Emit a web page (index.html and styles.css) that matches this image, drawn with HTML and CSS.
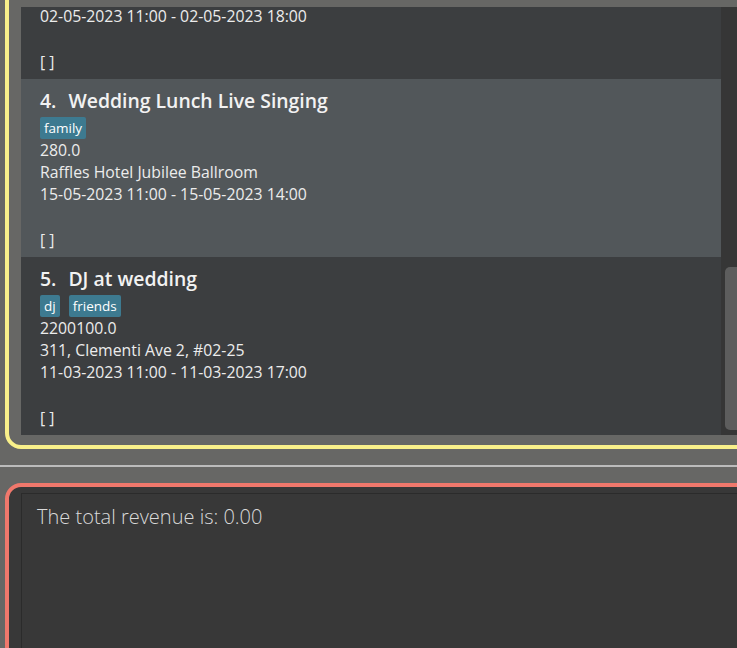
FILE: index.html
```html
<!DOCTYPE html>
<html>
<head>
<meta charset="utf-8">
<link rel="stylesheet" href="styles.css">
</head>
<body>
<div class="app">
  <div class="list-panel">
    <div class="list">
      <div class="cells">
        <div class="cell cell-partial">
          <div class="line first">02-05-2023 11:00 - 02-05-2023 18:00</div>
          <div class="line blank"></div>
          <div class="line">[ ]</div>
        </div>
        <div class="cell selected">
          <div class="title"><span class="idx">4.</span>Wedding Lunch Live Singing</div>
          <div class="tags"><span class="tag">family</span></div>
          <div class="line">280.0</div>
          <div class="line">Raffles Hotel Jubilee Ballroom</div>
          <div class="line">15-05-2023 11:00 - 15-05-2023 14:00</div>
          <div class="line blank"></div>
          <div class="line">[ ]</div>
        </div>
        <div class="cell">
          <div class="title"><span class="idx">5.</span>DJ at wedding</div>
          <div class="tags"><span class="tag">dj</span><span class="tag">friends</span></div>
          <div class="line">2200100.0</div>
          <div class="line">311, Clementi Ave 2, #02-25</div>
          <div class="line">11-03-2023 11:00 - 11-03-2023 17:00</div>
          <div class="line blank"></div>
          <div class="line">[ ]</div>
        </div>
      </div>
      <div class="scrollbar"><div class="thumb"></div></div>
    </div>
  </div>
  <div class="separator"></div>
  <div class="result-panel">
    <div class="result-box">The total revenue is: 0.00</div>
  </div>
</div>
</body>
</html>
```

FILE: styles.css
```css
html, body {
  margin: 0;
  padding: 0;
}
body {
  background: #676765;
  width: 737px;
  height: 648px;
  overflow: hidden;
  font-family: "Open Sans", "Noto Sans", sans-serif;
}
.app {
  display: flex;
  flex-direction: column;
  height: 648px;
  overflow: hidden;
}
.list-panel {
  box-sizing: border-box;
  margin: -40px 0 0 5px;
  width: 747px;
  border: 4px solid #f9f08a;
  border-radius: 16px;
  padding: 43px 10px 10px 12px;
}
.list {
  display: flex;
  height: 428px;
  overflow: hidden;
}
.cells {
  width: 700px;
  background: #3c3e40;
  overflow: hidden;
}
.cell {
  box-sizing: border-box;
  height: 178px;
  padding: 8px 0 6px 19px;
  color: #ececec;
}
.cell-partial {
  height: auto;
  padding-top: 0;
}
.selected {
  background: #52575a;
}
.title {
  height: 28px;
  line-height: 28px;
  font-size: 19.4px;
  font-weight: 600;
  color: #f2f2f2;
  white-space: nowrap;
}
.idx {
  display: inline-block;
  margin-right: 12px;
}
.tags {
  display: flex;
  gap: 9px;
  margin-top: 2px;
}
.tag {
  height: 22px;
  line-height: 22px;
  padding: 0 4px;
  background: #3d7a90;
  color: #ffffff;
  font-size: 13.5px;
  border-radius: 2px;
}
.line {
  height: 22px;
  line-height: 22px;
  font-size: 15.8px;
  white-space: nowrap;
}
.line.first {
  height: 20px;
  line-height: 18px;
}
.line.blank {
  height: 24px;
}
.scrollbar {
  flex: 1;
  background: #363636;
  padding-top: 260px;
  padding-left: 4px;
}
.thumb {
  height: 163px;
  background: #5d5d5d;
  border-radius: 5px 0 0 5px;
}
.separator {
  flex: none;
  margin-top: 16px;
  height: 2px;
  background: #bcbcbc;
}
.result-panel {
  flex: none;
  box-sizing: border-box;
  margin: 16px 0 0 5px;
  width: 760px;
  height: 200px;
  border: 4px solid #f0786c;
  border-radius: 16px;
  background: #383838;
  padding: 6px 0 0 12px;
  overflow: hidden;
}
.result-box {
  height: 180px;
  border-top: 1px solid #2b2b2b;
  border-left: 1px solid #2b2b2b;
  padding: 10px 0 0 15px;
  font-size: 20px;
  font-weight: 300;
  color: #dadada;
  line-height: 26px;
}
```
